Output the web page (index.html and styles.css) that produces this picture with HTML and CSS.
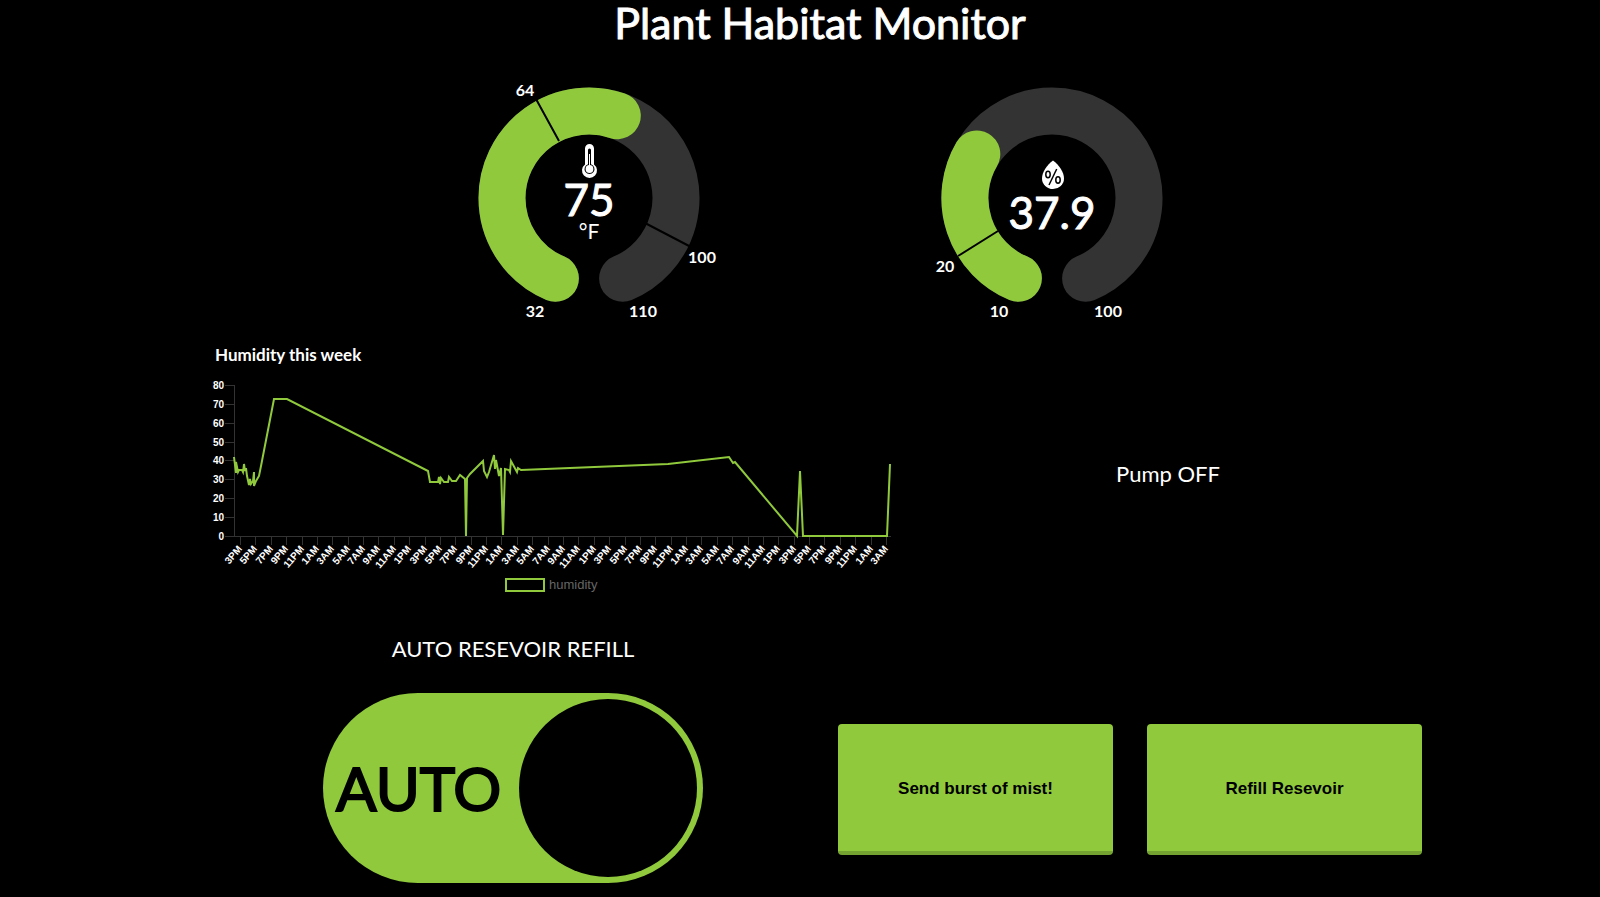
FILE: index.html
```html
<!DOCTYPE html>
<html lang="en">
<head>
<meta charset="utf-8">
<title>Plant Habitat Monitor</title>
<link rel="stylesheet" href="styles.css">
</head>
<body>
<main class="dashboard">
  <h1 class="title">Plant Habitat Monitor</h1>

  <section class="gauges">
    <svg class="gauge" viewBox="0 0 280 256" role="img" aria-label="Temperature 75 °F">
      <path class="arc arc-track" d="M106.400 204.300A87 87 0 1 1 173.600 204.300"/>
      <path class="arc arc-value" d="M106.400 204.300A87 87 0 0 1 53 124A87 87 0 0 1 168.300 41.700"/>
      <path class="mark" d="M87 25L110 67M196 149L242 173"/>
      <g class="gauge-label">
        <text x="76" y="22">64</text>
        <text x="253" y="189">100</text>
        <text x="86" y="243">32</text>
        <text x="194" y="243">110</text>
      </g>
      <path class="thermometer-body" d="M136 74.500a4.500 4.500 0 0 1 9 0v16a7.500 7.500 0 1 1-9 0z"/>
      <path class="thermometer-tube" d="M139 76a1.500 1.500 0 0 1 3 0v14.200a5 5 0 1 1-3 0z"/>
      <path class="thermometer-fill" d="M140.500 80v14"/>
      <circle class="thermometer-bulb" cx="140.500" cy="95" r="3.900"/>
      <text class="gauge-value" x="140" y="142">75</text>
      <text class="gauge-unit" x="140" y="165">°F</text>
    </svg>
    <svg class="gauge" viewBox="0 0 280 256" role="img" aria-label="Humidity 37.9 percent">
      <path class="arc arc-track" d="M106.400 204.300A87 87 0 1 1 173.600 204.300"/>
      <path class="arc arc-value" d="M106.400 204.300A87 87 0 0 1 64.800 80"/>
      <path class="mark" d="M46 182L86 157"/>
      <g class="gauge-label">
        <text x="33" y="198">20</text>
        <text x="87" y="243">10</text>
        <text x="196" y="243">100</text>
      </g>
      <path class="drop" d="M141 86.500C147 91 152 98 152 104.500A11 10.500 0 0 1 130 104.500C130 98 135 91 141 86.500z"/>
      <g class="percent">
        <ellipse cx="136" cy="100.500" rx="2.200" ry="3.200"/>
        <ellipse cx="146" cy="106" rx="2.200" ry="3.200"/>
        <path d="M144.700 95L137 111"/>
      </g>
      <text class="gauge-value" x="140" y="155">37.9</text>
    </svg>
  </section>

  <section class="status">
    <div class="history">
      <h2 class="history-title">Humidity this week</h2>
      <svg class="chart" viewBox="0 0 700 230" role="img" aria-label="Humidity this week">
        <g id="axes"></g>
        <polyline id="series" class="series"/>
        <rect class="legend-box" x="306" y="209" width="38" height="12"/>
        <text class="legend-text" x="349" y="219">humidity</text>
      </svg>
    </div>
    <p class="pump">Pump OFF</p>
  </section>

  <section class="controls">
    <div class="refill">
      <h2 class="refill-title" id="refill-title">AUTO RESEVOIR REFILL</h2>
      <label class="switch">
        <input class="switch-input" type="checkbox" role="switch" aria-labelledby="refill-title" checked>
        <span class="switch-text">AUTO</span>
        <span class="switch-knob"></span>
      </label>
    </div>
    <div class="actions">
      <button class="action" type="button">Send burst of mist!</button>
      <button class="action" type="button">Refill Resevoir</button>
    </div>
  </section>
</main>
<script src="chart.js"></script>
</body>
</html>
```
FILE: styles.css
```css
* {
  box-sizing: border-box;
}

body {
  margin: 0;
  background: #000;
  color: #fff;
  font-family: Lato, "Open Sans", sans-serif;
}

h1,
h2,
p {
  margin: 0;
}

.dashboard {
  padding-left: 40px;
}

.title {
  height: 74px;
  font-size: 43px;
  line-height: 45px;
  font-weight: 400;
  text-align: center;
  -webkit-text-stroke: 1px #fff;
}

.gauges {
  display: flex;
  justify-content: center;
  gap: 183px;
}

.gauge {
  display: block;
  width: 280px;
}

.arc {
  fill: none;
  stroke-width: 47;
  stroke-linecap: round;
}

.arc-track {
  stroke: #333;
}

.arc-value {
  stroke: #90ca3c;
}

.mark {
  fill: none;
  stroke: #000;
  stroke-width: 2;
}

.gauge text {
  fill: #fff;
  text-anchor: middle;
}

.gauge-label {
  font-size: 16px;
  font-weight: 700;
}

.gauge .gauge-value {
  font-size: 44px;
  stroke: #fff;
  stroke-width: 1;
}

.gauge .gauge-unit {
  font-size: 21px;
}

.thermometer-body,
.thermometer-bulb {
  fill: #fff;
}

.thermometer-tube {
  fill: #000;
}

.thermometer-fill {
  stroke: #fff;
  stroke-width: 1;
}

.drop {
  fill: #fff;
}

.percent {
  fill: none;
  stroke: #000;
  stroke-width: 1.5;
}

.status {
  display: grid;
  grid-template-columns: 700px 1fr;
  align-items: center;
  padding: 14px 164px 0 160px;
}

.history-title {
  padding-left: 15px;
  font-size: 17px;
  line-height: 22px;
  font-weight: 700;
}

.chart {
  display: block;
  width: 100%;
  margin-top: 4px;
}

.tick {
  stroke: #333;
  stroke-width: 1;
}

.tick-label {
  fill: #fff;
  font: 700 10px "Liberation Sans", Arial, sans-serif;
  text-anchor: end;
}

.series {
  fill: none;
  stroke: #90ca3c;
  stroke-width: 2;
}

.legend-box {
  fill: none;
  stroke: #90ca3c;
  stroke-width: 2;
}

.legend-text {
  fill: #666;
  font: 13px "Liberation Sans", Arial, sans-serif;
}

.pump {
  padding-top: 4px;
  font-size: 22px;
  line-height: 28px;
  text-align: center;
}

.controls {
  display: flex;
  justify-content: space-between;
  align-items: flex-end;
  padding: 35px 178px 10px 283px;
}

.refill-title {
  font-size: 22px;
  line-height: 28px;
  font-weight: 400;
  text-align: center;
}

.switch {
  display: flex;
  align-items: center;
  justify-content: space-between;
  width: 380px;
  height: 190px;
  margin-top: 30px;
  padding: 6px 6px 6px 13px;
  border-radius: 95px;
  background: #90ca3c;
  color: #000;
  cursor: pointer;
}

.switch-input {
  position: absolute;
  opacity: 0;
}

.switch-text {
  font-size: 60px;
  -webkit-text-stroke: 2px #000;
}

.switch-knob {
  width: 178px;
  height: 178px;
  border-radius: 50%;
  background: #000;
}

.actions {
  display: flex;
  gap: 34px;
  padding-bottom: 28px;
}

.action {
  width: 275px;
  height: 131px;
  padding: 2px 0 0;
  border: 0;
  border-bottom: 4px solid #74a331;
  border-radius: 4px;
  background: #90ca3c;
  color: #000;
  font: 700 17px "Liberation Sans", Arial, sans-serif;
  cursor: pointer;
}
```
FILE: chart.js
```js
const NS = "http://www.w3.org/2000/svg";
const axes = document.getElementById("axes");
const LEFT = 34;
const RIGHT = 691;
const BOTTOM = 166;

function add(name, attrs, text) {
  const el = document.createElementNS(NS, name);
  for (const key in attrs) el.setAttribute(key, attrs[key]);
  if (text !== undefined) el.textContent = text;
  axes.appendChild(el);
}

function line(x1, y1, x2, y2) {
  add("line", { class: "tick", x1, y1, x2, y2 });
}

line(LEFT + 0.5, 15, LEFT + 0.5, BOTTOM + 0.5);
line(LEFT, BOTTOM + 0.5, RIGHT, BOTTOM + 0.5);

for (let v = 0; v <= 80; v += 10) {
  const y = Math.round(BOTTOM - v * 1.89) + 0.5;
  line(25, y, LEFT, y);
  add("text", { class: "tick-label", x: 24, y: y + 3 }, String(v));
}

for (let i = 0; i < 43; i++) {
  const x = Math.round(40 + i * 15.38) + 0.5;
  const hour = (15 + i * 2) % 24;
  const label = (hour > 12 ? hour - 12 : hour) + (hour >= 12 ? "PM" : "AM");
  line(x, BOTTOM, x, BOTTOM + 9);
  add("text", { class: "tick-label", transform: `translate(${x + 2} ${BOTTOM + 13}) rotate(-50)` }, label);
}

const points = [
  [34, 87], [36, 103], [36, 92], [38, 102], [39, 100], [42, 100], [43, 102], [44, 94],
  [45, 101], [46, 98], [47, 106], [49, 115], [50, 109], [51, 114], [53, 111], [54, 102],
  [54, 116], [56, 111], [59, 106], [61, 96], [74, 29], [87, 29], [228, 101], [230, 112],
  [238, 112], [239, 107], [240, 114], [241, 108], [244, 112], [248, 112], [249, 107],
  [252, 111], [256, 111], [260, 105], [265, 109], [266, 166], [267, 108], [270, 104],
  [283, 91], [284, 101], [287, 107], [289, 102], [294, 85], [295, 99], [296, 90],
  [299, 106], [301, 98], [303, 165], [305, 99], [309, 100], [310, 102], [311, 91],
  [317, 102], [318, 98], [321, 100], [468, 94], [529, 87], [533, 93], [535, 92],
  [597, 166], [600, 101], [603, 166], [687, 166], [690, 94]
];
document.getElementById("series").setAttribute("points", points.map(p => p.join(",")).join(" "));
```
